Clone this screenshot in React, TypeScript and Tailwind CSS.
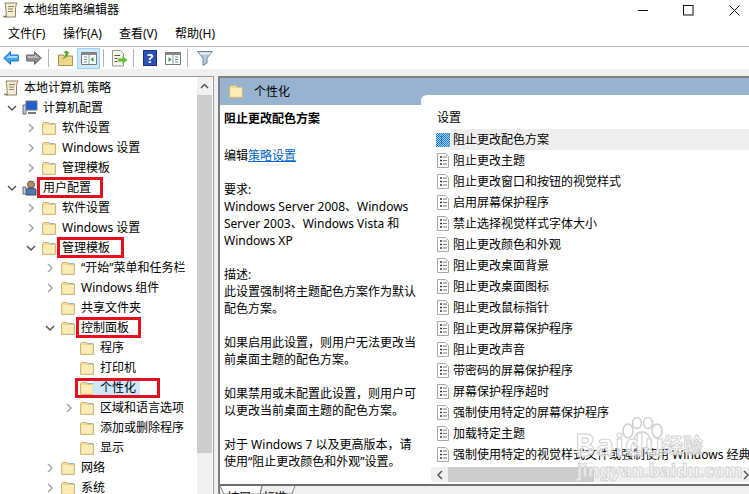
const FONT = "font-['Noto_Sans','Noto_Sans_CJK_SC',sans-serif]";

function Folder() {
  return (
    <svg width="16" height="15" viewBox="0 0 16 15" className="shrink-0">
      <path d="M1.5 3 L2.5 1.5 H8 L9 3 H14.5 V13.5 H1.5 Z" fill="#f3d98c" stroke="#cdb981" />
      <path d="M2.5 4 H13.5 V12.5 H2.5 Z" fill="#fcedb8" />
      <path d="M9 2 H14 V3 H9 Z" fill="#7fbde8" />
    </svg>
  );
}

function Chevron({ open }: { open?: boolean }) {
  return (
    <svg width="10" height="10" viewBox="0 0 10 10" className="shrink-0">
      {open ? (
        <path d="M1 3 L5 7 L9 3" fill="none" stroke="#555" strokeWidth="1.5" />
      ) : (
        <path d="M3 1 L7 5 L3 9" fill="none" stroke="#a6a6a6" strokeWidth="1.5" />
      )}
    </svg>
  );
}

function ScrollIcon() {
  return (
    <svg width="16" height="16" viewBox="0 0 16 16" className="shrink-0">
      <path d="M3 1 H15 C14 3 13.5 5 13.5 7 V15 H3 C4.5 13 4.5 11 4 9 C3.5 7 4 4 3 1 Z" fill="#f5ecd2" stroke="#8d8268" />
      <path d="M6 4.5 H12 M6 7 H11 M6 9.5 H11" stroke="#8d8268" />
      <path d="M1 14.5 H5" stroke="#8d8268" strokeWidth="1.5" />
    </svg>
  );
}

const dither = Array.from({ length: 98 }, (_, i) => ({
  x: (i % 7) * 2 + (Math.floor(i / 7) % 2),
  y: Math.floor(i / 7),
}));

function PolicyIcon({ selected }: { selected?: boolean }) {
  if (selected) {
    return (
      <svg width="14" height="14" viewBox="0 0 14 14" className="shrink-0">
        <rect width="14" height="14" fill="#1079d0" />
        {dither.map((d) => (
          <rect key={`${d.x}-${d.y}`} x={d.x} y={d.y} width="1" height="1" fill="#a9d3f2" />
        ))}
        <path d="M5 4 H6 M5 7 H6 M5 10 H6" stroke="#123" />
      </svg>
    );
  }
  return (
    <svg width="14" height="15" viewBox="0 0 14 15" className="shrink-0">
      <path d="M1.5 .5 H9.5 L12.5 3.5 V14.5 H1.5 Z" fill="#fff" stroke="#a8a8a8" />
      <path d="M4 4 H6 M4 7.5 H6 M4 11 H6" stroke="#333" strokeWidth="1.4" />
      <path d="M7 4 H11 M7 7.5 H11 M7 11 H11" stroke="#777" />
    </svg>
  );
}

function Divider({ className }: { className: string }) {
  return <div className={`h-[18px] w-px shrink-0 bg-[#b5b5b5] ${className}`} />;
}

function Toolbar() {
  return (
    <div className="flex h-[22px] items-center bg-white pl-[3px]">
      <svg width="16" height="14" viewBox="0 0 16 14" className="shrink-0">
        <path d="M.7 7 L7.5 .7 V4 H15.3 V10 H7.5 V13.3 Z" fill="#3ea3ee" stroke="#1a6fc4" />
        <path d="M3 7 L7 3.5 V5 H14.5 V7 Z" fill="#a5dafa" />
      </svg>
      <svg width="16" height="14" viewBox="0 0 16 14" className="ml-[7px] shrink-0">
        <path d="M15.3 7 L8.5 .7 V4 H.7 V10 H8.5 V13.3 Z" fill="#8c8c8c" stroke="#666" />
        <path d="M13 7 L9 3.5 V5 H1.5 V7 Z" fill="#bdbdbd" />
      </svg>
      <Divider className="ml-[6px]" />
      <svg width="15" height="16" viewBox="0 0 15 16" className="ml-[9px] shrink-0">
        <path d="M.5 5 H5 L6 6 H14.5 V15.5 H.5 Z" fill="#eed68c" stroke="#a99050" />
        <path d="M8 .5 L12 3 H10.5 C10.5 6 8 8 4 9.5 C6 7.5 7.5 6 7.5 3 H5.5 Z" fill="#5ea832" />
      </svg>
      <div className="ml-[4px] flex h-[21px] w-[23px] shrink-0 items-center justify-center border border-[#99d1ff] bg-[#cce8ff]">
        <svg width="16" height="13" viewBox="0 0 16 13">
          <path d="M.5 .5 H15.5 V12.5 H.5 Z" fill="#fff" stroke="#7a7a7a" />
          <path d="M1 1 H15 V3 H1 Z" fill="#8a8a8a" />
          <path d="M8 3 V12" stroke="#9a9a9a" />
          <path d="M12.5 5 L9.5 7.5 L12.5 10 Z" fill="#2f9e44" />
          <path d="M3 5 H6 M3 7.5 H6 M3 10 H6" stroke="#6d8fb3" />
        </svg>
      </div>
      <Divider className="ml-[3px]" />
      <svg width="17" height="17" viewBox="0 0 17 17" className="ml-[7px] shrink-0">
        <path d="M1.5 .5 H9.5 L12.5 3.5 V16 H1.5 Z" fill="#f7f2e2" stroke="#9a9a9a" />
        <path d="M3.5 5.5 H9 M3.5 8.5 H6.5 M3.5 11.5 H6.5" stroke="#555" />
        <path d="M7 8.5 H11.5 V6 L16.5 10 L11.5 14 V11.5 H7 Z" fill="#66bb3c" />
      </svg>
      <Divider className="ml-[5px]" />
      <div className="ml-[9px] flex h-[16px] w-[14px] shrink-0 items-center justify-center border border-[#1d2f80] bg-[#2b50b8] text-[13px] leading-none font-bold text-white">
        ?
      </div>
      <svg width="16" height="13" viewBox="0 0 16 13" className="ml-[8px] shrink-0">
        <path d="M.5 .5 H15.5 V12.5 H.5 Z" fill="#fff" stroke="#7a7a7a" />
        <path d="M1 1 H15 V3 H1 Z" fill="#8a8a8a" />
        <path d="M8 3 V12" stroke="#9a9a9a" />
        <path d="M3.5 5 L6.5 7.5 L3.5 10 Z" fill="#2f9e44" />
        <path d="M10 5 H13 M10 7.5 H13 M10 10 H13" stroke="#6d8fb3" />
      </svg>
      <Divider className="ml-[6px]" />
      <svg width="16" height="15" viewBox="0 0 16 15" className="ml-[9px] shrink-0">
        <path d="M.5 .5 H15.5 L10 7 V12 L6 14.5 V7 Z" fill="#b9cbd8" stroke="#6f8797" />
        <path d="M2 1.5 H14 L12.5 3.5 H3.5 Z" fill="#e4edf3" />
      </svg>
    </div>
  );
}

type Node = { label: string; depth: number; arrow?: 'open' | 'closed'; boxed?: number; selected?: boolean };

const computerNodes: Node[] = [
  { label: '软件设置', depth: 1, arrow: 'closed' },
  { label: 'Windows 设置', depth: 1, arrow: 'closed' },
  { label: '管理模板', depth: 1, arrow: 'closed' },
];

const userNodes: Node[] = [
  { label: '软件设置', depth: 1, arrow: 'closed' },
  { label: 'Windows 设置', depth: 1, arrow: 'closed' },
  { label: '管理模板', depth: 1, arrow: 'open', boxed: 67 },
  { label: '“开始”菜单和任务栏', depth: 2, arrow: 'closed' },
  { label: 'Windows 组件', depth: 2, arrow: 'closed' },
  { label: '共享文件夹', depth: 2 },
  { label: '控制面板', depth: 2, arrow: 'open', boxed: 65 },
  { label: '程序', depth: 3 },
  { label: '打印机', depth: 3 },
  { label: '个性化', depth: 3, selected: true },
  { label: '区域和语言选项', depth: 3, arrow: 'closed' },
  { label: '添加或删除程序', depth: 3 },
  { label: '显示', depth: 3 },
  { label: '网络', depth: 2, arrow: 'closed' },
  { label: '系统', depth: 2, arrow: 'closed' },
];

const indent: Record<number, string> = { 1: 'pl-[26px]', 2: 'pl-[45px]', 3: 'pl-[64px]' };

function TreeRow({ node }: { node: Node }) {
  return (
    <div className={`flex h-[20px] items-center ${indent[node.depth]}`}>
      <span className="flex w-[15px] shrink-0 items-center">
        {node.arrow && <Chevron open={node.arrow === 'open'} />}
      </span>
      <Folder />
      <span className="relative ml-[5px] flex h-[18px] items-center whitespace-nowrap">
        {node.selected && <span className="absolute top-0 left-[-7px] h-full w-[47px] bg-[#cce8ff]" />}
        <span className="relative">{node.label}</span>
        {node.boxed && (
          <span
            className="absolute top-[-2px] left-[-5px] h-[21px] border-[3px] border-[#e60f1e]"
            style={{ width: node.boxed }}
          />
        )}
        {node.selected && (
          <span className="absolute top-[-1px] left-[-25px] h-[20px] w-[85px] border-[3px] border-[#e60f1e]" />
        )}
      </span>
    </div>
  );
}

function Tree() {
  return (
    <div className="flex h-full w-[214px] shrink-0 border-t border-r border-[#9a9a9a] bg-white">
      <div className="min-w-0 flex-1 overflow-hidden pt-[1px] text-[12px] text-black">
        <div className="flex h-[20px] items-center pl-[3px]">
          <ScrollIcon />
          <span className="ml-[5px] whitespace-nowrap">本地计算机 策略</span>
        </div>
        <div className="flex h-[20px] items-center pl-[7px]">
          <Chevron open />
          <svg width="16" height="16" viewBox="0 0 16 16" className="ml-[5px] shrink-0">
            <rect x="4" y="1" width="11" height="9" fill="#1f5fd0" stroke="#777" />
            <path d="M1 5 H4 V14 H1 Z" fill="#c9d3dc" stroke="#5c6b77" />
            <path d="M6 13 H14" stroke="#777" strokeWidth="2" />
          </svg>
          <span className="ml-[5px]">计算机配置</span>
        </div>
        {computerNodes.map((n) => (
          <TreeRow key={n.label} node={n} />
        ))}
        <div className="flex h-[20px] items-center pl-[7px]">
          <Chevron open />
          <svg width="16" height="16" viewBox="0 0 16 16" className="ml-[5px] shrink-0">
            <circle cx="9" cy="4.5" r="3.5" fill="#b58a68" stroke="#6b5645" />
            <path d="M4 15 V10 C4 8 7 8 9 8 C11 8 14 8 14 10 V15 Z" fill="#4d79a8" stroke="#384f6a" />
            <path d="M1 7 H4 V14 H1 Z" fill="#c9d3dc" stroke="#5c6b77" />
          </svg>
          <span className="relative ml-[5px]">
            用户配置
            <span className="absolute top-[-2px] left-[-6px] h-[21px] w-[66px] border-[3px] border-[#e60f1e]" />
          </span>
        </div>
        {userNodes.map((n) => (
          <TreeRow key={n.label} node={n} />
        ))}
      </div>
      <div className="mr-[1px] flex w-[15px] shrink-0 flex-col bg-[#f0f0f0]">
        <div className="flex h-[18px] items-center justify-center">
          <svg width="9" height="6" viewBox="0 0 9 6">
            <path d="M1 5 L4.5 1.5 L8 5" fill="none" stroke="#555" strokeWidth="1.5" />
          </svg>
        </div>
        <div className="h-[358px] bg-[#cdcdcd]" />
      </div>
    </div>
  );
}

const policies = [
  '阻止更改主题',
  '阻止更改窗口和按钮的视觉样式',
  '启用屏幕保护程序',
  '禁止选择视觉样式字体大小',
  '阻止更改颜色和外观',
  '阻止更改桌面背景',
  '阻止更改桌面图标',
  '阻止更改鼠标指针',
  '阻止更改屏幕保护程序',
  '阻止更改声音',
  '带密码的屏幕保护程序',
  '屏幕保护程序超时',
  '强制使用特定的屏幕保护程序',
  '加载特定主题',
  '强制使用特定的视觉样式文件或强制使用 Windows 经典',
];

// full-width comma, written as an escape so it stays U+FF0C
const COMMA = '\uFF0C';

function Description() {
  return (
    <div className="flex w-[201px] shrink-0 flex-col bg-white">
      <div className="flex h-[27px] shrink-0 items-center bg-[#98b3d0] pl-[8px] text-[12px] text-black">
        <Folder />
        <span className="ml-[10px]">个性化</span>
      </div>
      <div className="pt-[5px] pr-[3px] pl-[4px] text-[12px] leading-[17px] text-black">
        <p className="font-bold">阻止更改配色方案</p>
        <p className="mt-[20px]">
          编辑<span className="text-[#0066cc] underline">策略设置</span>
        </p>
        <p className="mt-[17px]">要求:</p>
        <p>Windows Server 2008、Windows Server 2003、Windows Vista 和 Windows XP</p>
        <p className="mt-[17px]">描述:</p>
        <p>此设置强制将主题配色方案作为默认配色方案。</p>
        <p className="mt-[17px]">{`如果启用此设置${COMMA}则用户无法更改当前桌面主题的配色方案。`}</p>
        <p className="mt-[17px]">{`如果禁用或未配置此设置${COMMA}则用户可以更改当前桌面主题的配色方案。`}</p>
        <p className="mt-[17px]">{`对于 Windows 7 以及更高版本${COMMA}请使用“阻止更改颜色和外观”设置。`}</p>
      </div>
    </div>
  );
}

function PolicyList() {
  return (
    <div className="flex min-w-0 flex-1 flex-col bg-[#98b3d0]">
      <div className="h-[17px] shrink-0" />
      <div className="flex min-h-0 flex-1 flex-col overflow-hidden rounded-tl-[6px] bg-white text-[12px] text-black">
        <div className="h-[34px] shrink-0 pt-[14px] pl-[16px] leading-[17px]">设置</div>
        <div className="flex h-[21px] shrink-0 items-center pl-[15px]">
          <PolicyIcon selected />
          <span className="ml-[1px] flex h-full flex-1 items-center bg-[#eeeeee] pl-[2px]">阻止更改配色方案</span>
        </div>
        {policies.map((p) => (
          <div key={p} className="flex h-[21px] shrink-0 items-center pl-[15px] whitespace-nowrap">
            <PolicyIcon />
            <span className="ml-[3px]">{p}</span>
          </div>
        ))}
        <div className="mt-[2px] ml-[10px] flex h-[15px] shrink-0 items-center bg-[#f0f0f0]">
          <svg width="17" height="10" viewBox="0 0 17 10" className="shrink-0">
            <path d="M11 1 L7 5 L11 9" fill="none" stroke="#555" strokeWidth="1.5" />
          </svg>
          <div className="h-full w-[146px] bg-[#cdcdcd]" />
          <svg width="10" height="10" viewBox="0 0 10 10" className="ml-auto shrink-0">
            <path d="M5 1 L9 5 L5 9" fill="none" stroke="#555" strokeWidth="1.5" />
          </svg>
        </div>
      </div>
    </div>
  );
}

function Watermark() {
  return (
    <div className="pointer-events-none absolute top-[415px] left-[572px] h-[65px] w-[140px] text-white/70">
      <svg width="46" height="34" viewBox="0 0 46 34" className="absolute top-[2px] left-[47px]">
        <g fill="#ffffff" fillOpacity="0.6" stroke="#cfcfcf" strokeWidth="1.5">
          <ellipse cx="9" cy="14" rx="5" ry="7" />
          <ellipse cx="18" cy="6" rx="4.5" ry="5.5" />
          <ellipse cx="29" cy="6" rx="4.5" ry="5.5" />
          <ellipse cx="38" cy="14" rx="5" ry="7" />
          <path d="M23 15 C30 15 34 25 30 29 C26 32 20 32 16 29 C12 25 16 15 23 15 Z" />
        </g>
      </svg>
      <span className="absolute top-[13px] left-[3px] text-[30px] leading-[34px] font-bold tracking-[1px] [-webkit-text-stroke:1px_#d2d2d2]">
        Baidu
      </span>
      <span className="absolute top-[19px] left-[91px] text-[20px] leading-[24px] font-bold [-webkit-text-stroke:1px_#d2d2d2]">
        经验
      </span>
      <span className="absolute top-[45px] left-[5px] text-[18px] leading-[20px] font-bold whitespace-nowrap [-webkit-text-stroke:1px_#d2d2d2]">
        jingyan.baidu.com
      </span>
    </div>
  );
}

export default function App() {
  return (
    <div className={`relative flex h-[494px] w-[749px] flex-col overflow-hidden bg-white ${FONT}`}>
      <div className="flex h-[20px] shrink-0 items-center pl-[2px] text-[12px] text-black">
        <ScrollIcon />
        <span className="ml-[5px]">本地组策略编辑器</span>
        <div className="ml-auto flex items-center">
          <svg width="11" height="11" viewBox="0 0 11 11" className="mr-[34px]">
            <path d="M0 5.5 H10" stroke="#111" />
          </svg>
          <svg width="11" height="11" viewBox="0 0 11 11" className="mr-[35px]">
            <rect x=".5" y=".5" width="9.5" height="9.5" fill="none" stroke="#111" />
          </svg>
          <svg width="11" height="11" viewBox="0 0 11 11" className="mr-[9px]">
            <path d="M.5 .5 L10.5 10.5 M10.5 .5 L.5 10.5" stroke="#111" />
          </svg>
        </div>
      </div>
      <div className="flex h-[27px] shrink-0 items-center border-b border-[#b9b9b9] pt-[2px] pl-[8px] text-[12px] text-black">
        <span className="w-[54px]">文件(F)</span>
        <span className="ml-[1px] w-[56px]">操作(A)</span>
        <span className="w-[56px]">查看(V)</span>
        <span>帮助(H)</span>
      </div>
      <Toolbar />
      <div className="flex min-h-0 flex-1 gap-[4px] bg-[#f0f0f0] pt-[7px]">
        <Tree />
        <div className="flex min-w-0 flex-1 flex-col border-t-2 border-l-2 border-[#808080]">
          <div className="flex min-h-0 flex-1">
            <Description />
            <PolicyList />
          </div>
          <div className="relative h-[10px] shrink-0 overflow-hidden border-t-2 border-[#6e6e6e] bg-[#f0f0f0] text-[12px] leading-[17px] text-black">
            <svg width="90" height="10" viewBox="0 0 90 10" className="absolute top-0 left-0">
              <path d="M0 0 L4 8 H40 L42 0" fill="#fff" stroke="#888" />
              <path d="M42 0 L40 8 H72 L75 0" fill="none" stroke="#888" />
            </svg>
            <span className="absolute top-[3px] left-[7px]">扩展</span>
            <span className="absolute top-[3px] left-[43px]">标准</span>
          </div>
        </div>
      </div>
      <Watermark />
    </div>
  );
}
